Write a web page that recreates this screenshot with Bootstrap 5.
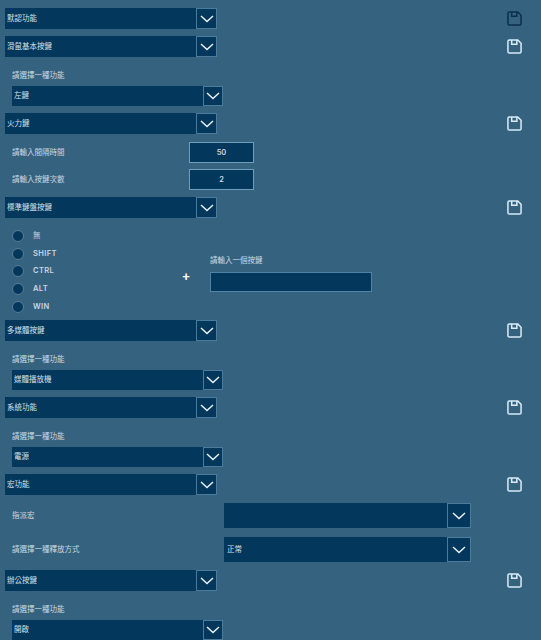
<!DOCTYPE html>
<html lang="zh-Hant">
<head>
  <meta charset="UTF-8" />
  <meta name="viewport" content="width=device-width, initial-scale=1.0"/>
  <title>按鍵設定</title>
  <link href="https://cdn.jsdelivr.net/npm/bootstrap@5.3.3/dist/css/bootstrap.min.css" rel="stylesheet"/>
  <style>
    html, body { height: 640px; overflow: hidden; }
    body {
      background-color: #35637f;
      color: #c9d8e3;
      font-family: "Liberation Sans", "Noto Sans CJK TC", sans-serif;
      font-size: 7.5px;
      line-height: 14px;
    }
    .key-page { padding: 8px 19px 0 5px; }
    .key-head { height: 21px; margin-bottom: 7px; }
    .key-pick { width: 212px; height: 21px; }
    .key-pick.is-sub { width: 211px; height: 20px; margin: 3px 0 7px 7px; }
    .key-pick.is-wide { width: 247px; height: 25px; }
    .key-value {
      flex: 1;
      background: #03375c;
      color: #d5e1ea;
      padding: 0 2px;
      line-height: inherit;
      display: flex;
      align-items: center;
    }
    .is-wide .key-value { padding: 0 3px; }
    .key-arrow {
      flex: 0 0 21px;
      padding: 0;
      border: 1px solid #4b7c9c;
      border-radius: 0;
      background: #03375c;
      display: flex;
      align-items: center;
      justify-content: center;
    }
    .is-sub .key-arrow { flex-basis: 20px; }
    .is-wide .key-arrow { flex-basis: 24px; }
    .key-label { padding-left: 7px; }
    .key-label.is-top { margin-top: 12px; }
    .key-line { height: 21px; margin-bottom: 6px; }
    .key-line + .key-line { margin-bottom: 7px; }
    .key-line .key-label { width: 184px; }
    .key-num {
      width: 65px;
      height: 21px;
      padding: 0;
      border: 1px solid #6f9dba;
      border-radius: 0;
      background: #03375c;
      color: #c9d8e3;
      font-family: Inter, sans-serif;
      font-weight: 600;
      font-size: 7.5px;
      text-align: center;
    }
    .key-mods { margin: 9px 0 4px; height: 89px; }
    .key-radios { width: 176px; padding-left: 7px; }
    .key-radio { height: 17.8px; gap: 9px; }
    .key-dot {
      width: 12px;
      height: 12px;
      border-radius: 50%;
      background: #03375c;
      border: 1px solid #587d94;
    }
    .key-name { font-family: Inter, sans-serif; font-size: 7.5px; font-weight: 600; letter-spacing: .4px; }
    .key-plus { width: 10px; text-align: center; color: #fff; font-size: 13px; font-weight: 700; margin-right: 19px; margin-top: 10px; }
    .key-side { padding-top: 3px; }
    .key-free { width: 162px; height: 20px; padding: 0; border: 1px solid #4f84a6; border-radius: 0; background: #03375c; margin-top: 4px; }
    .key-assign { height: 25px; margin-bottom: 9px; }
    .key-assign + .key-assign { margin-bottom: 8px; }
    .key-assign .key-label { width: 219px; }
    .key-save { width: 15px; height: 15px; color: #d9ecf8; }
    .key-save.is-dark { color: #0b2f4d; }
    .key-free:focus, .key-num:focus { box-shadow: none; }
  </style>
</head>
<body>

<svg class="d-none">
  <symbol id="chev" viewBox="0 0 14 8"><path d="M1 1l6 5.5L13 1" fill="none" stroke="#e8f3fa" stroke-width="1.5"/></symbol>
  <symbol id="disk" viewBox="0 0 16 16"><path d="M2.500 1h9l3.500 3.500v9a1.500 1.500 0 0 1-1.500 1.500h-11a1.500 1.500 0 0 1-1.500-1.500v-11a1.500 1.500 0 0 1 1.500-1.500zM5 1v4.500h5.500v-4.500" fill="none" stroke="currentColor" stroke-width="1.600"/></symbol>
</svg>

<div class="key-page">

  <div class="key-head d-flex justify-content-between align-items-center">
    <div class="key-pick d-flex"><div class="key-value">默認功能</div><button class="btn key-arrow" type="button"><svg width="14" height="8"><use href="#chev"/></svg></button></div>
    <svg class="key-save is-dark"><use href="#disk"/></svg>
  </div>

  <div class="key-head mb-0 d-flex justify-content-between align-items-center">
    <div class="key-pick d-flex"><div class="key-value">滑鼠基本按鍵</div><button class="btn key-arrow" type="button"><svg width="14" height="8"><use href="#chev"/></svg></button></div>
    <svg class="key-save"><use href="#disk"/></svg>
  </div>
  <div class="key-label is-top">請選擇一種功能</div>
  <div class="key-pick is-sub d-flex"><div class="key-value">左鍵</div><button class="btn key-arrow" type="button"><svg width="14" height="8"><use href="#chev"/></svg></button></div>

  <div class="key-head mb-2 d-flex justify-content-between align-items-center">
    <div class="key-pick d-flex"><div class="key-value">火力鍵</div><button class="btn key-arrow" type="button"><svg width="14" height="8"><use href="#chev"/></svg></button></div>
    <svg class="key-save"><use href="#disk"/></svg>
  </div>
  <div class="key-line d-flex align-items-center"><div class="key-label">請輸入間隔時間</div><input class="form-control key-num" value="50"></div>
  <div class="key-line d-flex align-items-center"><div class="key-label">請輸入按鍵次數</div><input class="form-control key-num" value="2"></div>

  <div class="key-head mb-0 d-flex justify-content-between align-items-center">
    <div class="key-pick d-flex"><div class="key-value">標準鍵盤按鍵</div><button class="btn key-arrow" type="button"><svg width="14" height="8"><use href="#chev"/></svg></button></div>
    <svg class="key-save"><use href="#disk"/></svg>
  </div>
  <div class="key-mods d-flex align-items-center">
    <div class="key-radios">
      <div class="key-radio d-flex align-items-center"><span class="key-dot"></span><span>無</span></div>
      <div class="key-radio d-flex align-items-center"><span class="key-dot"></span><span class="key-name">SHIFT</span></div>
      <div class="key-radio d-flex align-items-center"><span class="key-dot"></span><span class="key-name">CTRL</span></div>
      <div class="key-radio d-flex align-items-center"><span class="key-dot"></span><span class="key-name">ALT</span></div>
      <div class="key-radio d-flex align-items-center"><span class="key-dot"></span><span class="key-name">WIN</span></div>
    </div>
    <div class="key-plus">+</div>
    <div class="key-side">
      <div>請輸入一個按鍵</div>
      <input class="form-control key-free">
    </div>
  </div>

  <div class="key-head mb-0 d-flex justify-content-between align-items-center">
    <div class="key-pick d-flex"><div class="key-value">多媒體按鍵</div><button class="btn key-arrow" type="button"><svg width="14" height="8"><use href="#chev"/></svg></button></div>
    <svg class="key-save"><use href="#disk"/></svg>
  </div>
  <div class="key-label is-top">請選擇一種功能</div>
  <div class="key-pick is-sub d-flex"><div class="key-value">媒體播放機</div><button class="btn key-arrow" type="button"><svg width="14" height="8"><use href="#chev"/></svg></button></div>

  <div class="key-head mb-0 d-flex justify-content-between align-items-center">
    <div class="key-pick d-flex"><div class="key-value">系統功能</div><button class="btn key-arrow" type="button"><svg width="14" height="8"><use href="#chev"/></svg></button></div>
    <svg class="key-save"><use href="#disk"/></svg>
  </div>
  <div class="key-label is-top">請選擇一種功能</div>
  <div class="key-pick is-sub d-flex"><div class="key-value">電源</div><button class="btn key-arrow" type="button"><svg width="14" height="8"><use href="#chev"/></svg></button></div>

  <div class="key-head mb-0 d-flex justify-content-between align-items-center">
    <div class="key-pick d-flex"><div class="key-value">宏功能</div><button class="btn key-arrow" type="button"><svg width="14" height="8"><use href="#chev"/></svg></button></div>
    <svg class="key-save"><use href="#disk"/></svg>
  </div>
  <div class="key-assign d-flex align-items-center mt-2"><div class="key-label">指派宏</div><div class="key-pick is-wide d-flex"><div class="key-value"></div><button class="btn key-arrow" type="button"><svg width="14" height="8"><use href="#chev"/></svg></button></div></div>
  <div class="key-assign d-flex align-items-center"><div class="key-label">請選擇一種釋放方式</div><div class="key-pick is-wide d-flex"><div class="key-value">正常</div><button class="btn key-arrow" type="button"><svg width="14" height="8"><use href="#chev"/></svg></button></div></div>

  <div class="key-head mb-0 d-flex justify-content-between align-items-center">
    <div class="key-pick d-flex"><div class="key-value">辦公按鍵</div><button class="btn key-arrow" type="button"><svg width="14" height="8"><use href="#chev"/></svg></button></div>
    <svg class="key-save"><use href="#disk"/></svg>
  </div>
  <div class="key-label is-top">請選擇一種功能</div>
  <div class="key-pick is-sub d-flex"><div class="key-value">開啟</div><button class="btn key-arrow" type="button"><svg width="14" height="8"><use href="#chev"/></svg></button></div>

</div>

<script src="https://cdn.jsdelivr.net/npm/bootstrap@5.3.3/dist/js/bootstrap.bundle.min.js"></script>
</body>
</html>
